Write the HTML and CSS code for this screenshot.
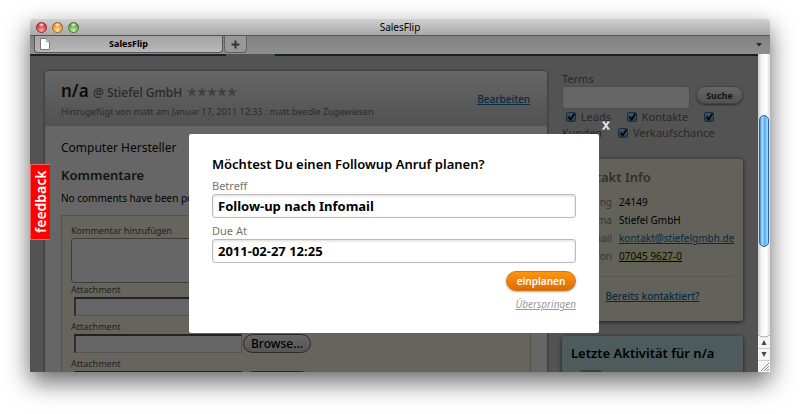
FILE: index.html
```html
<!DOCTYPE html>
<html lang="de">
<head>
<meta charset="utf-8">
<title>SalesFlip</title>
<link rel="stylesheet" href="styles.css">
</head>
<body>
<div class="window">
  <header class="titlebar">
    <div class="lights"><i class="light red"></i><i class="light amber"></i><i class="light green"></i></div>
    <span class="window-title">SalesFlip</span>
  </header>
  <div class="tabbar">
    <div class="tab">
      <svg class="doc" width="10" height="12" viewBox="0 0 10 12" aria-hidden="true"><path d="M.5.5h6l3 3v8h-9z" fill="#fff" stroke="#777"/><path d="M6.5.5v3h3" fill="#ddd" stroke="#999"/></svg>
      <span class="tab-title">SalesFlip</span>
    </div>
    <button class="new-tab" type="button" aria-label="Neuer Tab"><svg width="9" height="9" viewBox="0 0 9 9"><path d="M4.500.5v8M.5 4.500h8" stroke="#333" stroke-width="2"/></svg></button>
    <svg class="tab-menu" width="6" height="4" viewBox="0 0 6 4" aria-hidden="true"><path d="M0 0h6L3 3.500z" fill="#2a2a2a"/></svg>
  </div>
  <div class="viewport">
    <div class="stage">
      <div class="page">
        <div class="nav"><span></span><span></span></div>
        <div class="columns">
          <main class="lead">
            <div class="lead-head">
              <div>
                <h1 class="lead-name">n/a <span class="company">@ Stiefel GmbH</span>
                  <svg class="stars" width="50" height="10" viewBox="0 0 50 10" aria-hidden="true"><defs><path id="s" d="M5 0l1.200 3.500h3.600L7 5.800l1.100 3.700L5 7.400 1.900 9.500 3 5.800.2 3.500h3.600z"/></defs><g fill="#a0a0a0"><use href="#s"/><use href="#s" x="10"/><use href="#s" x="20"/><use href="#s" x="30"/><use href="#s" x="40"/></g></svg>
                </h1>
                <p class="meta">Hinzugefügt von matt am Januar 17, 2011 12:33 : matt.beedle Zugewiesen</p>
              </div>
              <a class="edit" href="#">Bearbeiten</a>
            </div>
            <div class="lead-body">
              <p class="about">Computer Hersteller</p>
              <h2 class="heading">Kommentare</h2>
              <p class="empty">No comments have been posted yet.</p>
              <form class="comment-form">
                <label for="comment">Kommentar hinzufügen</label>
                <textarea id="comment"></textarea>
                <label for="f1">Attachment</label>
                <div class="file"><input id="f1" type="text"><button type="button">Browse...</button></div>
                <label for="f2">Attachment</label>
                <div class="file"><input id="f2" type="text"><button type="button">Browse...</button></div>
                <label for="f3">Attachment</label>
                <div class="file"><input id="f3" type="text"><button type="button">Browse...</button></div>
              </form>
            </div>
          </main>
          <aside class="side">
            <form class="search">
              <label class="terms" for="terms">Terms</label>
              <div class="search-row"><input id="terms" type="text"><button type="button">Suche</button></div>
              <div class="filters">
                <input id="c1" type="checkbox" checked><label for="c1"> Leads</label>
                <input id="c2" type="checkbox" checked><label for="c2"> Kontakte</label>
                <input id="c3" type="checkbox" checked><label for="c3"> Kunden</label>
                <input id="c4" type="checkbox" checked><label for="c4"> Verkaufschance</label>
              </div>
            </form>
            <section class="card contact">
              <h2>Kontakt Info</h2>
              <dl>
                <dt>Eingang</dt><dd>24149</dd>
                <dt>Firma</dt><dd>Stiefel GmbH</dd>
                <dt>E-mail</dt><dd><a href="#">kontakt@stiefelgmbh.de</a></dd>
                <dt>Telefon</dt><dd><a class="phone" href="#">07045 9627-0</a></dd>
              </dl>
              <p class="contacted"><a href="#">Bereits kontaktiert?</a></p>
            </section>
            <section class="card activity">
              <h2>Letzte Aktivität für n/a</h2>
              <div class="event"><i></i><span>matt.beedle</span></div>
            </section>
          </aside>
        </div>
      </div>
      <div class="overlay">
        <form class="dialog">
          <button class="close" type="button" aria-label="Schließen"><svg width="8" height="9" viewBox="0 0 8 9"><path d="M1.500 1l5 7M6.500 1l-5 7" stroke="#e6e6e6" stroke-width="2"/><path d="M0 1h3M5 1h3M0 8h3M5 8h3" stroke="#e6e6e6" stroke-width="1"/></svg></button>
          <h2>Möchtest Du einen Followup Anruf planen?</h2>
          <label for="subject">Betreff</label>
          <input id="subject" type="text" value="Follow-up nach Infomail">
          <label for="due">Due At</label>
          <input id="due" type="text" value="2011-02-27 12:25">
          <button class="plan" type="button">einplanen</button>
          <a class="skip" href="#">Überspringen</a>
        </form>
      </div>
      <a class="feedback" href="#">feedback</a>
    </div>
    <div class="scrollbar" aria-hidden="true">
      <div class="track"><i class="thumb"></i></div>
      <svg class="arrows" width="12" height="37" viewBox="0 0 12 37"><path d="M0 0h12v37H0z" fill="#f4f4f4"/><path d="M0 0q6 4 12 0" fill="#fff" stroke="#aaa"/><path d="M0 13.500h12M0 25.500h12" stroke="#ccc"/><path d="M3.500 10L6 5l2.500 5zM3.500 17h5L6 22z" fill="#444"/><path d="M3 36l8-8M6 36l5-5M9 36l2-2" stroke="#888"/></svg>
    </div>
  </div>
</div>
</body>
</html>
```
FILE: styles.css
```css
* { box-sizing: border-box; }

body {
  margin: 0;
  padding: 18px 30px 42px;
  min-height: 100vh;
  background: #fff;
  font-family: "Noto Sans", "Open Sans", sans-serif;
  color: #000;
}

h1, h2, p, dl, dd { margin: 0; }

h2 { font-weight: 600; }

button, input, textarea { font-family: inherit; margin: 0; }

a { color: #0f6ba8; }

.window {
  display: flex;
  flex-direction: column;
  height: calc(100vh - 60px);
  border-radius: 4px 4px 0 0;
  box-shadow: 0 10px 24px rgba(0, 0, 0, .6);
}

.titlebar {
  display: grid;
  grid-template-columns: 1fr auto 1fr;
  align-items: center;
  height: 18px;
  padding: 0 6px;
  border-top: 1px solid #e4e4e4;
  border-bottom: 1px solid #555;
  border-radius: 4px 4px 0 0;
  background: linear-gradient(#d0d0d0, #a8a8a8);
}

.window-title { font-size: 10px; line-height: 16px; }

.lights { display: flex; gap: 5px; }

.light {
  width: 11px;
  height: 11px;
  border: 1px solid #8a3030;
  border-radius: 50%;
}

.red { background: radial-gradient(ellipse 3px 2px at 50% 20%, #fff, transparent), radial-gradient(circle at 50% 85%, #ffb0a8, #e03438 65%); }
.amber { border-color: #9a6030; background: radial-gradient(ellipse 3px 2px at 50% 20%, #fff, transparent), radial-gradient(circle at 50% 85%, #ffe890, #ee8f35 65%); }
.green { border-color: #417535; background: radial-gradient(ellipse 3px 2px at 50% 20%, #fff, transparent), radial-gradient(circle at 50% 85%, #cdf5a0, #5fa848 65%); }

.tabbar {
  display: flex;
  align-items: flex-start;
  height: 18px;
  padding: 0 8px 0 4px;
  background: linear-gradient(#828282, #8f8f8f);
}

.tab {
  display: grid;
  grid-template-columns: 20px 1fr 20px;
  align-items: center;
  width: 189px;
  height: 17px;
  padding: 0 5px;
  border: 1px solid #555;
  border-top: 0;
  border-radius: 0 0 4px 4px;
  background: linear-gradient(#a4a4a4, #b8b8b8);
}

.tab-title { font-size: 9px; font-weight: 700; line-height: 14px; text-align: center; }

.new-tab {
  display: grid;
  place-items: center;
  width: 23px;
  height: 17px;
  margin-left: 1px;
  padding: 0;
  border: 1px solid #626262;
  border-top: 0;
  border-radius: 0 0 4px 4px;
  background: #989898;
}

.tab-menu { margin: 7px 0 0 auto; }

.viewport { display: flex; flex: 1; min-height: 0; }

.stage { position: relative; flex: 1; overflow: hidden; }

.page { height: 100%; overflow: hidden; background: #cfcfcf; }

.nav { display: flex; gap: 49px; height: 2px; }
.nav span { flex: 1; background: #40506a; }
.nav span:first-child { flex: 0 0 196px; }

.columns {
  display: grid;
  grid-template-columns: 1fr 181px;
  gap: 15px;
  align-items: start;
  padding: 15px 15px 0;
}

.lead {
  border-radius: 4px 4px 0 0;
  background: #fff;
  box-shadow: 0 0 3px rgba(0, 0, 0, .6);
}

.lead-head {
  display: flex;
  align-items: center;
  justify-content: space-between;
  height: 55px;
  padding: 0 17px 0 16px;
  border-radius: 4px 4px 0 0;
  background: linear-gradient(#fff, #cbcbcb);
}

.lead-name { font-size: 17px; line-height: 24px; font-weight: 600; color: #222; }
.company { font-size: 12px; font-weight: 500; color: #666; }
.meta { font-size: 9px; line-height: 14px; color: #6b6b6b; }
.edit { font-size: 10px; font-weight: 500; }

.lead-body { padding: 12px 16px 0; }
.about { font-size: 12px; line-height: 20px; color: #111; }
.heading { margin-top: 7px; font-size: 13px; line-height: 20px; color: #333; }
.empty { margin-top: 5px; font-size: 10px; line-height: 16px; }

.comment-form {
  height: 240px;
  margin-top: 9px;
  padding: 8px 9px;
  border: 1px solid #d8d2a8;
  background: #fffbe6;
}

.comment-form label { display: block; font-size: 9px; line-height: 14px; color: #555; }

.comment-form textarea {
  display: block;
  width: 100%;
  height: 45px;
  border: 1px solid #999;
  border-radius: 3px;
  background: #fff;
  resize: none;
}

.file { display: flex; gap: 1px; margin: 0 0 4px 3px; }

.file input {
  width: 168px;
  height: 19px;
  border: 1px solid #ccc;
  border-top: 2px solid #555;
  border-left: 2px solid #777;
  background: #fff;
}

.file button {
  width: 68px;
  height: 19px;
  padding: 0;
  border: 1px solid #666;
  border-radius: 10px;
  background: linear-gradient(#fff, #d8d8d8);
  font-size: 12px;
  font-weight: 500;
  line-height: 16px;
}

.terms { display: block; font-size: 11px; line-height: 15px; color: #666; }

.search-row { display: flex; gap: 6px; align-items: flex-start; }

.search-row input {
  flex: 1;
  min-width: 0;
  height: 23px;
  border: 1px solid #bbb;
  border-radius: 3px;
  background: #fff;
}

.search-row button {
  width: 47px;
  height: 18px;
  padding: 0;
  border: 1px solid #aaa;
  border-radius: 9px;
  background: linear-gradient(#fff, #ccc);
  box-shadow: 0 1px 2px rgba(0, 0, 0, .5);
  font-size: 9px;
  font-weight: 700;
  color: #333;
}

.filters { height: 50px; font-size: 11px; line-height: 16px; color: #666; }
.filters label { margin-right: 9px; }

.filters input {
  appearance: none;
  width: 10px;
  height: 10px;
  margin: 0 2px 0 4px;
  border: 1px solid #4a6f96;
  border-radius: 2px;
  vertical-align: -1px;
  background: url("data:image/svg+xml,%3Csvg xmlns='http://www.w3.org/2000/svg' viewBox='0 0 8 8'%3E%3Cpath d='M1.500 3.500l2 3 4-6' fill='none' stroke='%23000' stroke-width='1.600'/%3E%3C/svg%3E"), linear-gradient(#a8d0f8, #5a9ee0);
}

.card { border-radius: 3px; box-shadow: 0 1px 4px rgba(0, 0, 0, .7); }
.card h2 { font-size: 13px; line-height: 20px; }

.contact { height: 162px; padding: 8px 9px; background: #f6f5e2; }
.contact h2 { color: #777768; }

.contact dl {
  display: grid;
  grid-template-columns: 41px 1fr;
  column-gap: 7px;
  margin-top: 6px;
  padding-bottom: 11px;
  border-bottom: 1px solid #dcdbc8;
  font-size: 10px;
  line-height: 18px;
}

.contact dt { text-align: right; color: #888878; }
.phone { color: #111; background: #f8f5c0; }
.contacted { margin-top: 10px; text-align: center; font-size: 10px; line-height: 18px; font-weight: 500; }

.activity { height: 160px; margin-top: 15px; padding: 7px 9px; background: linear-gradient(#c4e4e6, #bcdcde); }
.event { display: flex; gap: 26px; margin: 7px 9px 0; font-size: 10px; line-height: 14px; color: #557; }
.event i { width: 22px; height: 22px; border-radius: 2px; background: #88a4ac; }

.overlay {
  position: absolute;
  inset: 0;
  display: flex;
  align-items: flex-start;
  justify-content: center;
  padding-top: 80px;
  background: rgba(0, 0, 0, .6);
}

.dialog {
  position: relative;
  display: flex;
  flex-direction: column;
  width: 410px;
  padding: 20px 23px 22px;
  border-radius: 2px;
  background: #fff;
}

.dialog h2 { margin-bottom: 4px; font-size: 13px; line-height: 20px; }
.dialog label { font-size: 11px; line-height: 16px; color: #777468; }

.dialog input {
  height: 24px;
  margin-bottom: 5px;
  padding: 0 5px;
  border: 1px solid #bbb;
  border-radius: 3px;
  background: #fff;
  box-shadow: inset 0 1px 3px rgba(0, 0, 0, .15);
  font-size: 13px;
  font-weight: 700;
}

.close {
  position: absolute;
  top: -13px;
  right: -11px;
  display: flex;
  padding: 0;
  border: 0;
  background: none;
}

.plan {
  align-self: flex-end;
  width: 70px;
  height: 20px;
  margin-top: 3px;
  padding: 0;
  border: 1px solid #d8740c;
  border-radius: 10px;
  background: linear-gradient(#ff9410, #dc6c0c);
  box-shadow: 0 1px 2px rgba(0, 0, 0, .3);
  color: #fff;
  font-size: 10px;
  font-weight: 600;
}

.skip {
  align-self: flex-end;
  margin-top: 6px;
  color: #999;
  font-size: 10px;
  line-height: 14px;
  font-style: italic;
}

.feedback {
  position: absolute;
  top: 110px;
  left: 0;
  width: 20px;
  height: 76px;
  border: 1px solid #e66;
  border-left: 0;
  background: #f00;
  color: #fff;
  font-size: 14px;
  line-height: 19px;
  font-weight: 600;
  text-align: center;
  text-decoration: none;
  writing-mode: vertical-rl;
  transform: rotate(180deg);
}

.scrollbar { display: flex; flex-direction: column; width: 12px; background: #f4f4f4; }

.track {
  display: flex;
  flex-direction: column;
  flex: 1;
  padding: 0 1px;
  background: linear-gradient(90deg, #ccc, #f4f4f4 30%, #fff 70%, #ddd);
}

.track::before { content: ""; flex: 61; }
.track::after { content: ""; flex: 89; }

.thumb {
  flex: 131;
  border: 1px solid #2b62b8;
  border-radius: 5px;
  background: linear-gradient(90deg, #3c8ae0, #b4dcfa 30%, #6ab4f4 50%, #58b0f6 60%, #a4e4ff);
}
```
